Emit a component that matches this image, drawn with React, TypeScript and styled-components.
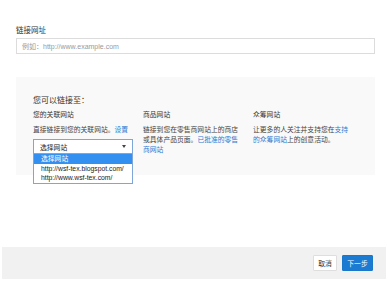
import { FC } from 'react';
import styled, { createGlobalStyle } from 'styled-components';

const GlobalStyle = createGlobalStyle`
  html, body {
    margin: 0;
    padding: 0;
    background: #fff;
  }
  body {
    font-family: "Liberation Sans", "Noto Sans CJK SC", sans-serif;
    color: #444;
  }
`;

const sites = ['选择网站', 'http://wsf-tex.blogspot.com/', 'http://www.wsf-tex.com/'];

const App: FC = () => {
  return (
    <Page>
      <GlobalStyle />
      <Form>
        <Label>链接网址</Label>
        <Input placeholder="例如：http://www.example.com" />
        <Panel>
          <PanelTitle>您可以链接至：</PanelTitle>
          <Columns>
            <Column>
              <Heading>您的关联网站</Heading>
              <Desc>
                直接链接到您的关联网站。<Link>设置</Link>
              </Desc>
              <SelectWrap>
                <SelectBox>
                  <span>选择网站</span>
                  <Caret />
                </SelectBox>
                <Options>
                  {sites.map((s, i) => (
                    <Option key={s} active={i === 0}>
                      {s}
                    </Option>
                  ))}
                </Options>
              </SelectWrap>
            </Column>
            <Column>
              <Heading>商品网站</Heading>
              <Desc>
                链接到您在零售商网站上的商店或具体产品页面。<Link>已批准的零售商网站</Link>
              </Desc>
            </Column>
            <Column>
              <Heading>众筹网站</Heading>
              <Desc>
                让更多的人关注并支持您在<Link>支持的众筹网站</Link>上的创意活动。
              </Desc>
            </Column>
          </Columns>
        </Panel>
      </Form>
      <Footer>
        <Button width={24}>取消</Button>
        <Button primary width={31}>
          下一步
        </Button>
      </Footer>
    </Page>
  );
};

export default App;

const Page = styled.div`
  width: 388px;
  height: 281px;
  display: flex;
  flex-direction: column;
  justify-content: space-between;
  box-sizing: border-box;
  padding-bottom: 2px;
`;

const Form = styled.div`
  padding: 26px 13px 0 16px;
`;

const Label = styled.div`
  font-size: 7.5px;
  line-height: 10px;
  color: #333;
  margin-bottom: 2px;
`;

const Input = styled.input`
  display: block;
  box-sizing: border-box;
  width: 100%;
  height: 16px;
  margin: 0;
  padding: 0 5px;
  border: 1px solid #dcdcdc;
  font-family: inherit;
  font-size: 7px;
  color: #333;
  outline: none;

  &::placeholder {
    color: #9a9a9a;
    opacity: 1;
  }
`;

const Panel = styled.div`
  margin-top: 23px;
  background: #f9f9f9;
  padding: 18px 17px 0 17px;
  height: 98px;
  box-sizing: border-box;
`;

const PanelTitle = styled.div`
  font-size: 8px;
  line-height: 11px;
  color: #333;
  margin-bottom: 4px;
`;

const Columns = styled.div`
  display: grid;
  grid-template-columns: repeat(3, 100px);
  column-gap: 10px;
`;

const Column = styled.div`
  display: flex;
  flex-direction: column;
`;

const Heading = styled.div`
  font-size: 6.8px;
  line-height: 10px;
  color: #333;
  margin-bottom: 5px;
`;

const Desc = styled.div`
  font-size: 6.8px;
  line-height: 10px;
  color: #444;
`;

const Link = styled.span`
  color: #2a7ad2;
`;

const SelectWrap = styled.div`
  position: relative;
  margin-top: 4px;
  width: 100px;
`;

const SelectBox = styled.div`
  box-sizing: border-box;
  height: 15px;
  display: flex;
  align-items: center;
  justify-content: space-between;
  padding: 0 6px 0 6px;
  background: #fff;
  border: 1px solid #7fa6d9;
  font-size: 6.8px;
  color: #222;
`;

const Caret = styled.span`
  width: 0;
  height: 0;
  border-left: 2.5px solid transparent;
  border-right: 2.5px solid transparent;
  border-top: 3px solid #444;
`;

const Options = styled.div`
  position: absolute;
  top: 15px;
  left: 0;
  width: 100px;
  box-sizing: border-box;
  background: #fff;
  border: 1px solid #7fa6d9;
  border-top: none;
  z-index: 2;
`;

const Option = styled.div<{ active?: boolean }>`
  font-size: 6.8px;
  line-height: 9.7px;
  padding: 0 2px 0 7px;
  white-space: nowrap;
  color: ${(p) => (p.active ? '#fff' : '#222')};
  background: ${(p) => (p.active ? '#3390f0' : '#fff')};
`;

const Footer = styled.div`
  margin: 0 2px;
  height: 32px;
  background: #f1f1f1;
  display: flex;
  align-items: center;
  justify-content: flex-end;
  gap: 5px;
  padding: 0 13px 0 0;
`;

const Button = styled.button<{ primary?: boolean; width: number }>`
  box-sizing: border-box;
  width: ${(p) => p.width}px;
  height: 16px;
  margin: 0;
  padding: 0;
  font-family: inherit;
  font-size: 6.8px;
  border-radius: 1px;
  border: 1px solid ${(p) => (p.primary ? '#1b78c9' : '#dedede')};
  background: ${(p) => (p.primary ? '#1b7bd3' : '#fff')};
  color: ${(p) => (p.primary ? '#fff' : '#333')};
`;
